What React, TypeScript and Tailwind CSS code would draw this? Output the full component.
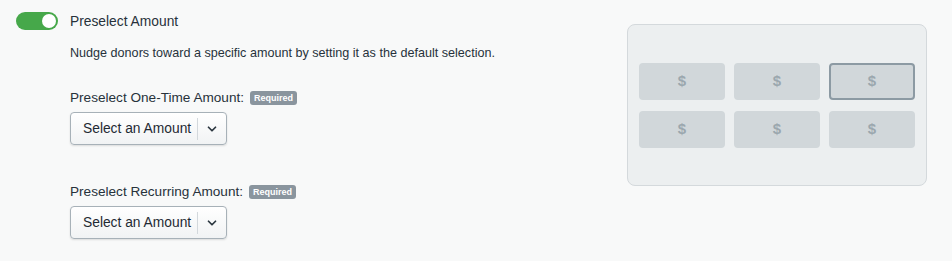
import { ChevronDown } from 'lucide-react'

function RequiredBadge() {
  return (
    <span className="ml-[6px] inline-flex h-[14px] items-center rounded-[3px] bg-[#8a959e] px-[4px] text-[9px] font-bold leading-none text-white">
      Required
    </span>
  )
}

function AmountSelect() {
  return (
    <div className="mt-[6px] flex h-[33px] w-[157px] items-center rounded-[4px] border border-[#a7b1b8] bg-gradient-to-b from-white to-[#f1f3f4] shadow-[0_1px_2px_rgba(0,0,0,0.12)]">
      <span className="flex-1 pl-[12px] pt-[1px] text-[13.8px] text-[#1f2a33]">Select an Amount</span>
      <span className="h-[22px] w-px bg-[#d3d8dc]" />
      <span className="flex w-[28px] items-center justify-center">
        <ChevronDown className="h-[14px] w-[14px] text-[#2c3740]" strokeWidth={3} />
      </span>
    </div>
  )
}

export default function App() {
  const amounts = [false, false, true, false, false, false]

  return (
    <div
      className="flex h-[261px] w-[952px] bg-[#f8f9f9] text-[#2b3640]"
      style={{ fontFamily: '"Liberation Sans", Arial, sans-serif' }}
    >
      {/* Left: settings */}
      <div className="flex-1 pl-[16px] pt-[12px]">
        <div className="flex h-[18px] items-center gap-[12px]">
          <div className="flex h-[18px] w-[42px] items-center justify-end rounded-full bg-[#46a84a] pr-[2px]">
            <span className="h-[14px] w-[14px] rounded-full bg-white" />
          </div>
          <span className="pt-[2px] text-[13.8px] leading-[18px] text-[#27323b]">Preselect Amount</span>
        </div>

        <div className="pl-[54px]">
          <p className="mt-[15px] text-[12.6px] leading-[16px] text-[#27323b]">
            Nudge donors toward a specific amount by setting it as the default selection.
          </p>

          <div className="mt-[29px]">
            <div className="flex h-[16px] items-center text-[13.6px] leading-[16px] text-[#27323b]">
              Preselect One-Time Amount:
              <RequiredBadge />
            </div>
            <AmountSelect />
          </div>

          <div className="mt-[39px]">
            <div className="flex h-[16px] items-center text-[13.6px] leading-[16px] text-[#27323b]">
              Preselect Recurring Amount:
              <RequiredBadge />
            </div>
            <AmountSelect />
          </div>
        </div>
      </div>

      {/* Right: preview */}
      <div className="pr-[25px] pt-[24px]">
        <div className="flex h-[162px] w-[300px] items-center justify-center rounded-[8px] border border-[#d4d9dc] bg-[#eceff0]">
          <div className="grid grid-cols-3 gap-x-[9px] gap-y-[11px]">
            {amounts.map((selected, i) => (
              <div
                key={i}
                className={`flex h-[37px] w-[86px] items-center justify-center rounded-[4px] bg-[#d1d7da] text-[15px] font-bold text-[#9ba7ae] ${
                  selected ? 'border-2 border-[#8c9aa3]' : ''
                }`}
              >
                $
              </div>
            ))}
          </div>
        </div>
      </div>
    </div>
  )
}
